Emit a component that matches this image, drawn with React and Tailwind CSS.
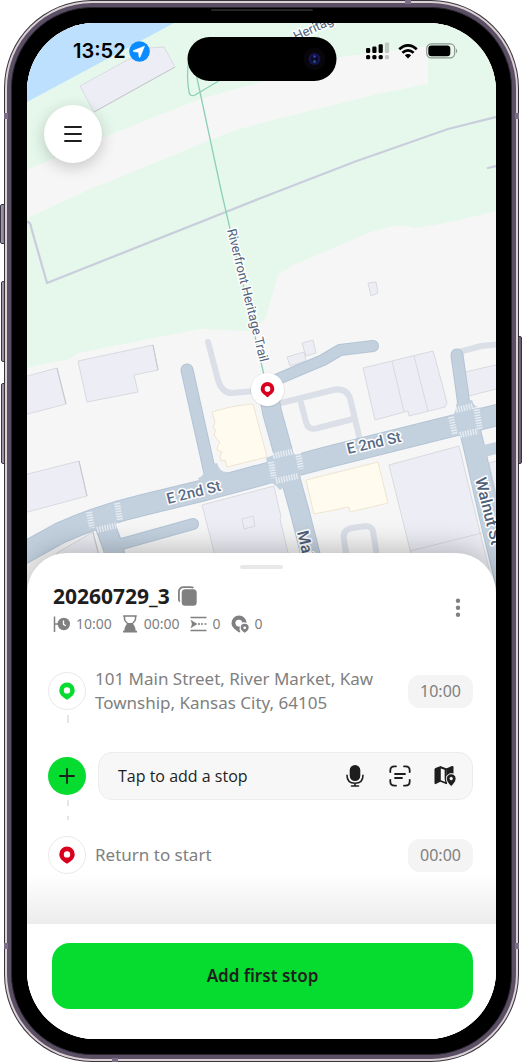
import React from "react";

const CROSSWALKS =
  "M273 456L295 451M271 462L274 478M298 453L301 469M276 481L298 476M456 410L473 406M451 417L455 435M476 407L480 430M460 435L478 431M89 512L92 528M117 503L120 520M97 530L118 525";

function StreetMap() {
  return (
    <svg
      className="absolute inset-0 h-full w-full"
      viewBox="27 23 469 577"
      preserveAspectRatio="xMidYMin slice"
      role="img"
      aria-label="Street map"
    >
      <rect x="-400" y="0" width="1400" height="700" fill="#f6f6f7" />
      <path
        d="M-400 0H1000V100L496 211L451 222L416 228Q400 224 389 227L368 233L293 265L278 275L266 317L261 324L250 331Q225 330 207 329L200 329L78 353L68 360L53 362L27 368L-400 440Z"
        fill="#e6f8ec"
      />
      <path d="M-400 0H216L174 23L27 102L-400 330Z" fill="#bde0ff" />
      <path
        d="M27 170L102 138L200 99L261 82L341 57L428 46V84L386 92L261 123L230 132L88 190L27 218Z"
        fill="#f6f6f7"
      />
      <g fill="#edeef5" stroke="#d9dae0" strokeWidth="1">
        <path d="M80 86L149 48L164 47L175 67L94 112Z" />
        <path d="M78 361L153 345L158 370L134 375L138 392L87 402Z" />
        <path d="M20 378L57 368L66 404L20 416Z" />
        <path d="M20 476L79 461L87 496L20 514Z" />
        <path d="M57 553L93 532L105 580H50Z" />
        <path d="M202 505L274 486L281 517L280 519L297 590H224Z" />
        <path d="M242 519L253 516L255 526L244 529Z" />
        <path d="M363 368L433 351L441 380L447 403L445 407L409 416L408 411L375 420Z" />
        <path d="M392 361L404 412M414 356L428 411" />
        <path d="M389 465L459 446L494 590H420Z" />
        <path d="M410 551L482 533" />
        <path d="M465 372L500 364V388L469 396Z" />
        <path d="M489 463L500 460V510Z" />
        <path d="M287 357L304 352L306 361L290 366Z" />
        <path d="M302 343L313 340L316 353L306 356Z" />
        <path d="M368 283L376 282L378 293L371 296Z" />
      </g>
      <path d="M94 112L175 67M57 368L66 404M79 461L87 496M93 532L105 580M153 345L158 370" stroke="#c6c6cb" fill="none" />
      <g fill="#fffbee" stroke="#eee5d0" strokeWidth="1">
        <path d="M212 412Q230 406 253 404L267 457L227 467L225 460L221 461L220 456L222 452L217 450L218 445L220 443L214 435L216 430L213 428L215 422Z" />
        <path d="M306 480L378 462L388 503L350 512L349 507L314 514Z" />
      </g>
      <g fill="none" stroke="#dadfe8" strokeWidth="6" strokeLinecap="round" strokeLinejoin="round">
        <path d="M208 342L218 380Q222 393 232 393L255 391" />
        <path d="M281 403L333 390Q346 387 350 398L359 436V455" />
        <path d="M301 403L306 422Q308 431 318 428L353 419" />
        <path d="M459 352L481 346L500 344" />
        <path d="M352 590L344 540Q342 530 352 528L366 526Q371 526 373 531L382 590" />
      </g>
      <g fill="none" strokeLinecap="round" strokeLinejoin="round">
        <g stroke="#b3c4d4">
          <path d="M187 370L212 482" strokeWidth="13" />
          <path d="M278 379L323 360L340 350L373 346" strokeWidth="12" />
          <path d="M457 355L466 420" strokeWidth="13" />
          <path d="M466 415L474 447L489 513L510 600" strokeWidth="22" />
          <path d="M269 396L272 412L300 513L322 600" strokeWidth="20" />
          <path d="M103 520L113 547L125 600" strokeWidth="21" />
          <path d="M118 545L193 524" strokeWidth="12" />
          <path d="M10 561L60 533Q100 515 143 505L205 490L268 473L328 457L444 428L510 412" strokeWidth="22" />
        </g>
        <g stroke="#c3d1df">
          <path d="M187 370L212 482" strokeWidth="11" />
          <path d="M278 379L323 360L340 350L373 346" strokeWidth="10" />
          <path d="M457 355L466 420" strokeWidth="11" />
          <path d="M466 415L474 447L489 513L510 600" strokeWidth="20" />
          <path d="M476 453L505 446" strokeWidth="12" />
          <path d="M269 396L272 412L300 513L322 600" strokeWidth="18" />
          <path d="M103 520L113 547L125 600" strokeWidth="19" />
          <path d="M118 545L193 524" strokeWidth="10" />
          <path d="M10 561L60 533Q100 515 143 505L205 490L268 473L328 457L444 428L510 412" strokeWidth="20" />
        </g>
      </g>
      <path d="M198 478Q205 477 204 466L217 463Q220 473 228 472L222 482H200ZM449 418Q457 414 456 404L472 400Q474 408 482 408L470 420ZM256 470Q269 468 266 458L290 448Q294 456 301 454L312 466Q300 466 301 475L280 490Q272 480 262 481Z" fill="#c3d1df" />
      <path d={CROSSWALKS} fill="none" stroke="#ffffff" strokeOpacity="0.6" strokeWidth="6" strokeDasharray="1.4 1.2" />
      <g fill="none" stroke="#c9cedd" strokeWidth="2.3" strokeLinejoin="round" strokeLinecap="round">
        <path d="M20 222H28Q31 223 31 227L47 283L261 198L354 162L448 129L500 116" />
        <path d="M488 168L500 165" />
      </g>
      <path d="M193 60L197 78L221 190L267 388M189 60Q186 75 189 92Q190 97 195 95L222 79" fill="none" stroke="#8bd0b4" strokeWidth="1.3" />
      <g
        fill="#566a86"
        stroke="#ffffff"
        strokeWidth="3"
        strokeLinejoin="round"
        paintOrder="stroke"
        className="font-['Roboto','Liberation_Sans',sans-serif]"
      >
        <g fontSize="15" fontWeight="500">
          <text transform="translate(168 504) rotate(-14)">E 2nd St</text>
          <text transform="translate(348 454) rotate(-13)">E 2nd St</text>
        </g>
        <g fontSize="16" fontWeight="500" fill="#4e6078">
          <text transform="translate(475 479) rotate(76)">Walnut St</text>
          <text transform="translate(297 532) rotate(77)">Main St</text>
        </g>
        <g fontSize="13" fill="#52637a">
          <text transform="translate(227 230) rotate(76)">Riverfront Heritage Trail</text>
          <text transform="translate(296 41) rotate(-25)">Heritage Trail</text>
        </g>
      </g>
      <circle cx="267.500" cy="390" r="17.500" fill="#000" opacity="0.06" />
      <circle cx="267.500" cy="389.500" r="16.500" fill="#fff" />
      <path
        fillRule="evenodd"
        fill="#d9001f"
        d="M267.500 382A6.800 6.800 0 0 0 260.700 388.800C260.700 393 264.500 394.500 266.400 396.600Q267.500 397.700 268.600 396.600C270.500 394.500 274.300 393 274.300 388.800A6.800 6.800 0 0 0 267.500 382ZM267.500 386.100A2.800 2.800 0 1 1 267.500 391.700A2.800 2.800 0 1 1 267.500 386.100Z"
      />
    </svg>
  );
}

function StatusBar() {
  return (
    <div className="relative flex h-[58px] items-start justify-between pt-[14px] pr-[37px] pl-[46px]">
      <div className="flex h-7 items-center gap-[3px]">
        <span className="font-['Inter','Liberation_Sans',sans-serif] text-[20px] leading-7 font-semibold text-black">13:52</span>
        <svg width="21" height="21" viewBox="0 0 21 21" aria-hidden="true">
          <circle cx="10.500" cy="10.500" r="10.300" fill="#0a8bff" />
          <path d="M15.500 5.200L4.500 9.600Q3.700 10.100 4.600 10.600L9.500 11.200L10.100 16Q10.500 17 11.100 16Z" fill="#fff" stroke="#fff" strokeWidth=".6" strokeLinejoin="round" />
        </svg>
      </div>
      <div className="flex h-7 items-center gap-2">
        <svg width="24" height="18" viewBox="0 0 24 18" aria-hidden="true">
          <g>
            <rect x="0" y="6" width="4.200" height="5" rx="1.200" />
            <rect x="6.300" y="4.500" width="4.200" height="6.500" rx="1.200" />
            <rect x="12.600" y="2.200" width="4.200" height="8.800" rx="1.200" />
            <rect x="0" y="13" width="4.200" height="4.200" rx="1.500" />
            <rect x="6.300" y="13" width="4.200" height="4.200" rx="1.500" />
            <rect x="12.600" y="13" width="4.200" height="4.200" rx="1.500" />
            <g fill="#c2c9c4">
              <rect x="18.900" y="0.500" width="4.200" height="10.500" rx="1.200" />
              <rect x="18.900" y="13" width="4.200" height="4.200" rx="1.500" />
            </g>
          </g>
        </svg>
        <svg width="20" height="15" viewBox="0 0 20 15" aria-hidden="true">
          <g fill="none" stroke="#000" strokeWidth="2.700">
            <path d="M1.200 5.200Q10 -2.400 18.800 5.200" />
            <path d="M4.400 8.800Q10 4 15.600 8.800" />
          </g>
          <path d="M6.800 11.300Q10 8.700 13.200 11.300L10 14.600Z" />
        </svg>
        <svg width="33" height="16" viewBox="0 0 33 16" aria-hidden="true">
          <rect x="0.700" y="0.900" width="28" height="14" rx="4.600" fill="none" stroke="#000" strokeOpacity=".4" strokeWidth="1.200" />
          <rect x="2.300" y="2.500" width="22" height="10.800" rx="3.200" />
          <path d="M30.200 5.500Q32.300 8 30.200 10.400Z" opacity=".45" />
        </svg>
      </div>
    </div>
  );
}

function Pin({ className }) {
  return (
    <svg width="16" height="18" viewBox="0 0 16 18" className={className} aria-hidden="true">
      <path
        fillRule="evenodd"
        fill="currentColor"
        d="M8 .5A7.700 7.700 0 0 0 .3 8.200C.3 13 4 14.800 6.700 17.100Q8 18.100 9.300 17.100C12 14.800 15.700 13 15.700 8.200A7.700 7.700 0 0 0 8 .5ZM8 5.200A3.200 3.200 0 1 1 8 11.600A3.200 3.200 0 1 1 8 5.200Z"
      />
    </svg>
  );
}

function StopBadge({ className }) {
  return (
    <span className="flex size-[38px] shrink-0 items-center justify-center rounded-full border border-[#e9e9e9] bg-white">
      <Pin className={className} />
    </span>
  );
}

function TimePill({ label, value }) {
  return (
    <button type="button" aria-label={label + " " + value} className="h-[33px] w-[65px] shrink-0 rounded-xl bg-[#f4f4f4] text-base leading-6 text-[#808080]">
      {value}
    </button>
  );
}

function Stat({ children, value }) {
  return (
    <span className="flex items-center gap-1.5">
      {children}
      <span>{value}</span>
    </span>
  );
}

function RouteHeader() {
  return (
    <div className="flex items-center justify-between pr-[3px] pl-[5px]">
      <div>
        <div className="flex h-7 items-center gap-2">
          <h1 className="text-[21px] leading-7 font-bold text-[#1e1e1e]">20260729_3</h1>
          <button type="button" aria-label="Copy route name">
            <svg width="19" height="20" viewBox="0 0 19 20" aria-hidden="true">
              <rect x="3.700" y="3.300" width="15" height="16.500" rx="3.500" fill="#808080" />
              <path d="M1.800 15.500C1 15 .9 14 .9 13V6Q.9 1.100 6 1.100H12Q14.500 1.100 15.500 1.800" fill="none" stroke="#808080" strokeWidth="1.800" />
            </svg>
          </button>
        </div>
        <div className="mt-1 flex h-5 items-center gap-2.5 text-sm text-[#808080]">
          <Stat value="10:00">
            <svg width="17" height="18" viewBox="0 0 17 18" fill="none" stroke="#808080" strokeWidth="1.500" aria-hidden="true">
              <path d="M1.500 1.500V17M1.500 9H6" />
              <circle cx="10.800" cy="9" r="6.200" fill="#808080" stroke="none" />
              <path d="M10.500 5.500V9.300L12.800 10.700" stroke="#fff" strokeWidth="1.300" />
            </svg>
          </Stat>
          <Stat value="00:00">
            <svg width="16" height="18" viewBox="0 0 16 18" aria-hidden="true">
              <path d="M1.200 1H14.800M2.500 1V4Q2.500 6 5.500 8.500L6.500 9.500M13.500 1V4Q13.500 6 10.500 8.500L9.500 9.500" fill="none" stroke="#808080" strokeWidth="1.500" />
              <path d="M6 8H10Q13.600 11 13.600 15.800H15V17.500H1V15.800H2.400Q2.400 11 6 8Z" fill="#808080" />
            </svg>
          </Stat>
          <Stat value="0">
            <svg width="17" height="18" viewBox="0 0 17 18" aria-hidden="true">
              <path d="M.5 2.500H16.500M.5 15.500H16.500M8 9H10M11 9H13M14.500 9H16.500" fill="none" stroke="#808080" strokeWidth="1.500" />
              <path d="M.5 4.700L7.500 9L.5 13.300L2 9Z" fill="#808080" />
            </svg>
          </Stat>
          <Stat value="0">
            <svg width="18" height="18" viewBox="0 0 18 18" aria-hidden="true">
              <path fillRule="evenodd" d="M8 .6A7.500 7.500 0 0 0 .5 8.100C.5 12.500 4.500 14.500 7.500 17.200L9.500 17.300Q8 14.500 8.800 11.400A3.400 3.400 0 1 1 11.200 7.500Q13.500 6.800 15.600 8A7.500 7.500 0 0 0 8 .6Z" fill="#808080" />
              <path fillRule="evenodd" d="M13.700 8.800A4 4 0 0 0 9.700 12.800C9.700 15 11.800 16.300 13.700 17.800C15.600 16.300 17.700 15 17.700 12.800A4 4 0 0 0 13.700 8.800ZM13.700 11.400A1.400 1.400 0 1 1 13.700 14.200A1.400 1.400 0 1 1 13.700 11.400Z" fill="#808080" />
            </svg>
          </Stat>
        </div>
      </div>
      <button type="button" aria-label="Route options" className="flex h-8 w-6 items-center justify-center">
        <svg width="6" height="20" viewBox="0 0 6 20" fill="#808080" aria-hidden="true">
          <circle cx="3" cy="2.800" r="2.200" />
          <circle cx="3" cy="9.800" r="2.200" />
          <circle cx="3" cy="16.800" r="2.200" />
        </svg>
      </button>
    </div>
  );
}

function AddStopField() {
  return (
    <div className="flex h-12 min-w-0 flex-1 items-center rounded-[14px] border border-[#ececec] bg-[#f7f7f7] pr-4">
      <button type="button" className="h-full flex-1 pl-[19px] text-left font-['Open_Sans','Noto_Sans',sans-serif] text-[16px] font-medium text-[#1e1e1e]">
        Tap to add a stop
      </button>
      <div className="flex gap-[23px]">
        <button type="button" aria-label="Speak an address">
          <svg width="22" height="22" viewBox="0 0 22 22" aria-hidden="true">
            <rect x="5.700" y="0" width="10.600" height="16" rx="5.300" fill="#1e1e1e" />
            <path d="M3 10.200Q3 18.300 11 18.300T19 10.200M11 18.300V21M7.500 21H14.500" fill="none" stroke="#1e1e1e" strokeWidth="1.600" strokeLinecap="round" />
          </svg>
        </button>
        <button type="button" aria-label="Scan an address">
          <svg width="22" height="22" viewBox="0 0 22 22" fill="none" stroke="#1e1e1e" strokeWidth="1.800" strokeLinecap="round" aria-hidden="true">
            <path d="M1.300 7V5.500Q1.300 1.300 5.500 1.300H7M15 1.300H16.500Q20.700 1.300 20.700 5.500V7M20.700 15V16.500Q20.700 20.700 16.500 20.700H15M7 20.700H5.500Q1.300 20.700 1.300 16.500V15M6 9H16M6 13H13" />
          </svg>
        </button>
        <button type="button" aria-label="Choose on the map">
          <svg width="22" height="22" viewBox="0 0 22 22" fill="#1e1e1e" aria-hidden="true">
            <path d="M.5 4.500Q.5 3.500 1.500 3L6.800 1V16.500L1.800 19Q.5 19.500 .5 18Z" />
            <path d="M6.200 1L12.800 3.600V5.400L6.200 3.200ZM6.200 15L12.800 17.400V19.300L6.200 16.800Z" />
            <path d="M12.200 3.600L18 1.100Q19.500 .6 19.500 2.200V8.500Q14.500 7.200 12.200 12Z" />
            <path d="M11.400 4V14L12.400 18.800" fill="none" stroke="#1e1e1e" strokeWidth="1.500" />
            <path
              fillRule="evenodd"
              stroke="#f7f7f7"
              strokeWidth=".8"
              d="M17.200 8.800A4.800 4.800 0 0 0 12.400 13.600C12.400 17 15 19 17.200 21.600C19.400 19 22 17 22 13.600A4.800 4.800 0 0 0 17.200 8.800ZM17.200 12.300A1.300 1.300 0 1 1 17.200 14.900A1.300 1.300 0 1 1 17.200 12.300Z"
            />
          </svg>
        </button>
      </div>
    </div>
  );
}

function Stops() {
  return (
    <ol className="flex flex-col">
      <li>
        <div className="flex items-center">
          <StopBadge className="text-[#06db2f]" />
          <p className="ml-[9px] min-w-0 flex-1 pr-6 text-[17px] leading-6 text-[#808080]">
            101 Main Street, River Market, Kaw Township, Kansas City, 64105
          </p>
          <TimePill label="Start time" value="10:00" />
        </div>
        <div className="flex h-[37px] w-10 flex-col items-center">
          <span className="h-2 w-0.5 bg-[#e6e6e6]" />
        </div>
      </li>
      <li>
        <div className="flex items-center gap-3">
          <button type="button" aria-label="Add stop" className="flex size-[38px] shrink-0 items-center justify-center rounded-full bg-[#06db2f]">
            <svg width="16" height="16" viewBox="0 0 16 16" stroke="#1e1e1e" strokeWidth="1.800" strokeLinecap="round" aria-hidden="true">
              <path d="M8 1V15M1 8H15" />
            </svg>
          </button>
          <AddStopField />
        </div>
        <div className="flex h-9 w-10 flex-col items-center gap-2.5">
          <span className="h-1.5 w-0.5 bg-[#e6e6e6]" />
          <span className="h-1 w-0.5 bg-[#e6e6e6]" />
        </div>
      </li>
      <li className="flex items-center">
        <StopBadge className="text-[#d9001f]" />
        <p className="ml-[9px] flex-1 text-[17px] leading-6 text-[#808080]">Return to start</p>
        <TimePill label="End time" value="00:00" />
      </li>
    </ol>
  );
}

function Screen() {
  return (
    <main className="overflow-hidden rounded-[68px] bg-white font-['Noto_Sans','Open_Sans',sans-serif]">
      <section className="relative h-[577px]">
        <StreetMap />
        <StatusBar />
        <button
          type="button"
          aria-label="Menu"
          className="relative mt-6 ml-[17px] flex size-[58px] items-center justify-center rounded-full bg-white shadow-[0_4px_16px_rgba(0,0,0,0.2)]"
        >
          <svg width="18" height="18" viewBox="0 0 18 18" stroke="#1e1e1e" strokeWidth="1.900" strokeLinecap="round" aria-hidden="true">
            <path d="M1 2H17M1 9H17M1 16H17" />
          </svg>
        </button>
      </section>
      <section className="relative -mt-[47px] rounded-t-[40px] bg-white shadow-[0_-4px_28px_rgba(0,0,0,0.25)]">
        <div className="flex justify-center pt-3">
          <span className="h-1 w-[43px] rounded-full bg-[#e8e8e8]" />
        </div>
        <div className="flex flex-col gap-[33px] pt-[13px] pr-[23px] pl-[21px]">
          <RouteHeader />
          <Stops />
        </div>
        <div className="h-[50px] bg-linear-to-b from-white to-[#ececec]" />
        <div className="bg-white pt-[19px] pr-[23px] pb-[30px] pl-[25px]">
          <button type="button" className="h-[66px] w-full rounded-[18px] bg-[#06db2f] text-[17px] font-semibold text-[#1e1e1e]">
            Add first stop
          </button>
        </div>
      </section>
    </main>
  );
}

function SideKey({ className }) {
  return (
    <span className={"absolute w-2 rounded-[2px] border border-[#3b3342] bg-linear-to-r from-[#a89cae] to-[#675b70] " + className} />
  );
}

export default function App() {
  return (
    <div className="relative bg-white pr-[3px] pl-1">
      <SideKey className="top-[204px] left-0 h-10" />
      <SideKey className="top-[281px] left-px h-[81px]" />
      <SideKey className="top-[383px] left-px h-[81px]" />
      <SideKey className="top-[336px] right-0 h-32" />
      <div className="relative rounded-[88px] bg-[#39323f] p-px">
        <div className="rounded-[87px] bg-[#dbd2d4] p-0.5">
          <div className="rounded-[85px] bg-[#5a4f64] p-1">
            <div className="rounded-[81px] border border-[#2b2630] bg-black p-[15px]">
              <Screen />
            </div>
          </div>
        </div>
        <span className="absolute top-[113px] left-0 h-1.5 w-1 bg-[#7b6d86]" />
        <span className="absolute top-[113px] right-0 h-1.5 w-1 bg-[#7b6d86]" />
        <span className="absolute bottom-[113px] left-0 h-1.5 w-1 bg-[#7b6d86]" />
        <span className="absolute right-0 bottom-[113px] h-1.5 w-1 bg-[#7b6d86]" />
        <span className="absolute top-0 right-[108px] h-1 w-1.5 bg-[#7b6d86]" />
        <span className="absolute bottom-0 left-[108px] h-1 w-1.5 bg-[#7b6d86]" />
        <span className="absolute top-[9px] left-1/2 h-0.5 w-[102px] -translate-x-1/2 rounded-full bg-[#252525]" />
        <div className="absolute top-[37px] left-1/2 flex h-11 w-[149px] -translate-x-1/2 items-center justify-end rounded-full bg-black pr-[11px]">
          <svg width="22" height="22" viewBox="0 0 22 22" aria-hidden="true">
            <circle cx="11" cy="11" r="11" fill="#08060b" />
            <circle cx="11" cy="11" r="6" fill="#14144a" />
            <circle cx="11" cy="11" r="3.500" fill="#0b0b2a" />
            <circle cx="11" cy="8.500" r="1.300" fill="#3c3fb0" />
            <circle cx="11" cy="13.500" r="1.300" fill="#1d64a0" />
          </svg>
        </div>
      </div>
    </div>
  );
}
